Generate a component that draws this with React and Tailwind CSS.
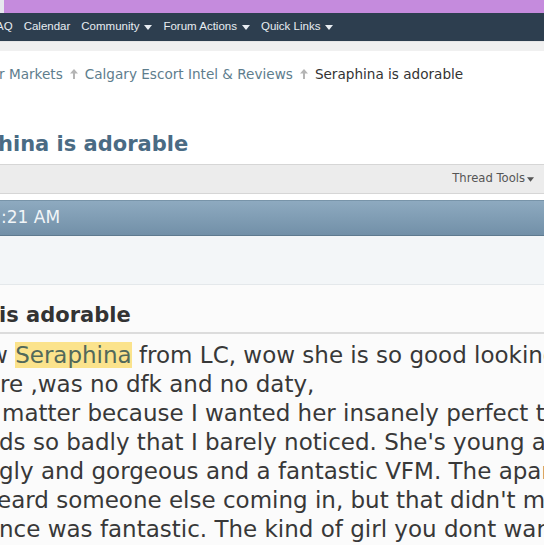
import React from "react";

const Caret = ({ w = 8, h = 5, color = "#e8edf2" }) => (
  <svg width={w} height={h} viewBox="0 0 8 5" className="shrink-0">
    <path d="M0 0 L8 0 L4 5 Z" fill={color} />
  </svg>
);

const Sep = () => (
  <svg width="8" height="10" viewBox="0 0 8 10" className="mx-[7px] shrink-0">
    <path d="M4 0 L8 4.5 L5 4.5 L5 10 L3 10 L3 4.5 L0 4.5 Z" fill="#b5b5b5" />
  </svg>
);

export default function App() {
  const navItems = [
    { t: "AQ", arrow: false, cls: "ml-[-4px]" },
    { t: "Calendar", arrow: false },
    { t: "Community", arrow: true },
    { t: "Forum Actions", arrow: true },
    { t: "Quick Links", arrow: true },
  ];
  const lines = [
    { t: "re ,was no dfk and no daty,", cls: "ml-[0px]" },
    { t: "matter because I wanted her insanely perfect tit", cls: "ml-[2px]" },
    { t: "ds so badly that I barely noticed. She's young and", cls: "ml-[-1px]" },
    { t: "gly and gorgeous and a fantastic VFM. The apartment", cls: "ml-[-1px]" },
    { t: "eard someone else coming in, but that didn't matter", cls: "ml-[-3px]" },
    { t: "nce was fantastic. The kind of girl you dont want", cls: "ml-[-1px]" },
  ];
  return (
    <div className="w-[544px] h-[545px] overflow-hidden bg-white flex flex-col">
      {/* top purple strip */}
      <div className="h-[13px] flex shrink-0">
        <div className="w-[4px] bg-[#e6e7ee]" />
        <div className="flex-1 bg-[#c58bdd]" />
      </div>
      {/* nav */}
      <nav className="h-[28px] shrink-0 bg-[#2d3e4f] flex items-center gap-[11px] whitespace-nowrap font-['Liberation_Sans',Arial,sans-serif] text-[11.5px] text-[#e8edf2]">
        {navItems.map((n) => (
          <div key={n.t} className={`flex items-center gap-[5px] ${n.cls || ""}`}>
            <span>{n.t}</span>
            {n.arrow && <Caret />}
          </div>
        ))}
      </nav>
      <div className="h-[10px] shrink-0 bg-[#f0f0f0] border-t border-[#e6e6e6]" />
      {/* breadcrumb */}
      <div className="h-[46px] shrink-0 flex items-center whitespace-nowrap font-['DejaVu_Sans',Verdana,sans-serif] text-[13.6px] text-[#5e7d8d]">
        <span className="ml-[-1px]">r Markets</span>
        <Sep />
        <span>Calgary Escort Intel &amp; Reviews</span>
        <Sep />
        <span className="text-[#333333]">Seraphina is adorable</span>
      </div>
      {/* thread title */}
      <div className="h-[67px] shrink-0 flex items-end pb-[6px] whitespace-nowrap font-['DejaVu_Sans',Verdana,sans-serif] font-bold text-[21px] leading-[28px] text-[#4a6b84]">
        <span className="ml-[-2px]">hina is adorable</span>
      </div>
      {/* toolbar */}
      <div className="h-[30px] shrink-0 bg-[#ececec] border-t border-b border-[#d6d6d6] flex items-center justify-end pr-[10px] gap-[2px] font-['DejaVu_Sans',Verdana,sans-serif] text-[11.6px] text-[#555555]">
        <span>Thread Tools</span>
        <Caret w={7} h={5} color="#555555" />
      </div>
      <div className="h-[6px] shrink-0" />
      {/* post head bar */}
      <div className="h-[36px] shrink-0 bg-gradient-to-b from-[#8eaac0] to-[#7290a8] border-t border-[#7894a9] border-b border-b-[#5e7a8f] flex items-center font-['DejaVu_Sans',Verdana,sans-serif] text-[17px] text-[#f1f5f8]">
        <span className="ml-[1px]">:21 AM</span>
      </div>
      {/* user info area */}
      <div className="h-[49px] shrink-0 bg-[#f3f6f8] border-b border-[#e4e8eb]" />
      {/* post body */}
      <div className="flex-1 bg-[#fbfbfb] font-['DejaVu_Sans',Verdana,sans-serif] whitespace-nowrap">
        <div className="pt-[16px] pb-[3px] border-b-2 border-[#dcdcdc] font-bold text-[21px] leading-[28px] text-[#333333]">
          <span className="ml-[-1px]">is adorable</span>
        </div>
        <div className="pt-[7px] text-[23px] leading-[29px] text-[#383838]">
          <div className="ml-[-11px]">
            w{" "}
            <span className="bg-[#fbe38c] text-[#52695a]">Seraphina</span>{" "}
            from LC, wow she is so good looking
          </div>
          {lines.map((l) => (
            <div key={l.t} className={l.cls}>
              {l.t}
            </div>
          ))}
        </div>
      </div>
    </div>
  );
}
